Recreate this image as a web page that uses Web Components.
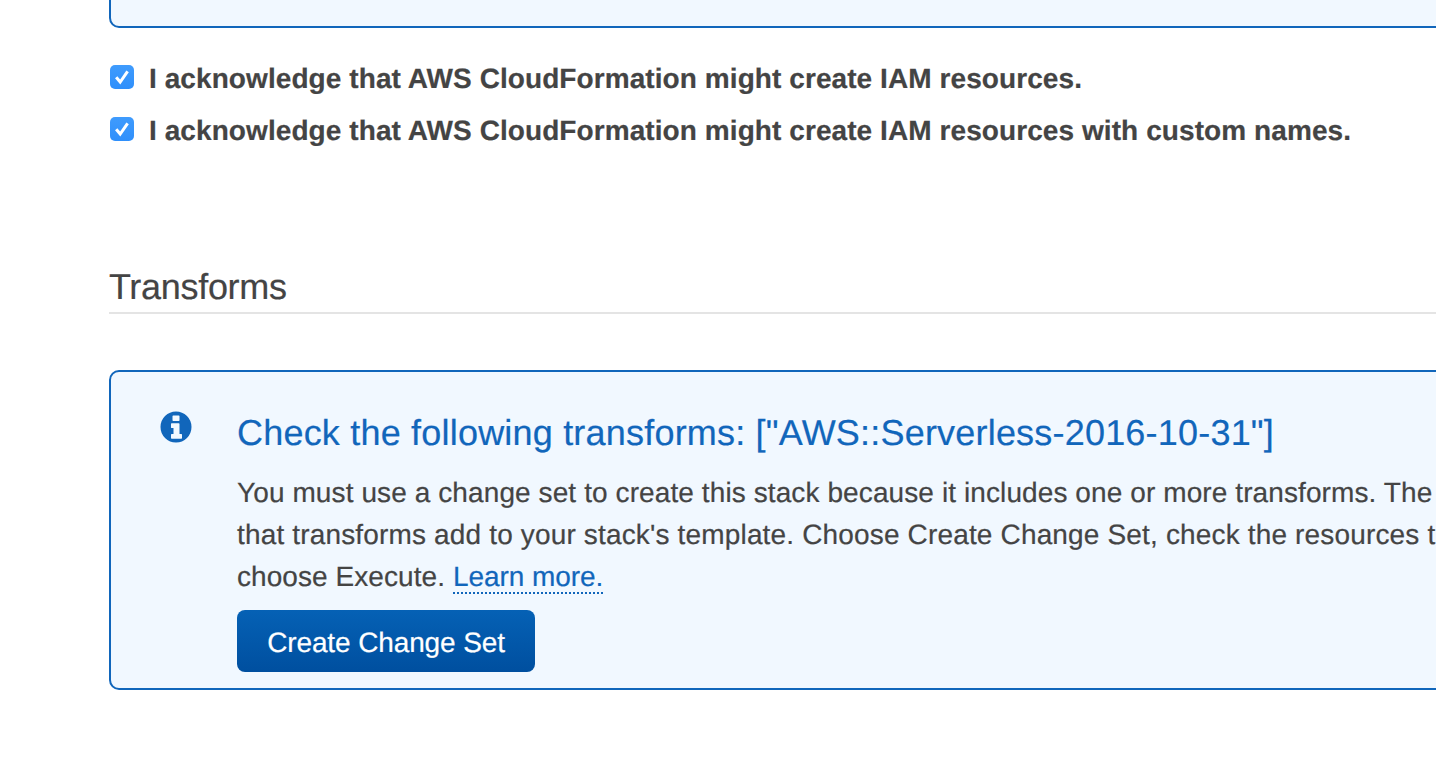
<!DOCTYPE html>
<html>
<head>
<meta charset="utf-8">
<style>
    html, body { margin: 0; padding: 0; height: 100%; overflow: hidden; background: #ffffff; }
    body { font-family: "Liberation Sans", Arial, sans-serif; color: #444444; text-rendering: geometricPrecision; -webkit-text-stroke: 0.2px; }
    #page { width: 1700px; padding-left: 109px; box-sizing: border-box; display: flex; flex-direction: column; margin-top: -60px; }
    .l1 { letter-spacing: 0.1px; }
    .l2 { letter-spacing: 0.16px; }
    .l3 { letter-spacing: 0.07px; }
</style>
</head>
<body>
<div id="page">
    <info-box empty></info-box>
    <ack-check style="margin-top: 37px">I acknowledge that AWS CloudFormation might create IAM resources.</ack-check>
    <ack-check style="margin-top: 28px">I acknowledge that AWS CloudFormation might create IAM resources with custom names.</ack-check>
    <section-title>Transforms</section-title>
    <info-box title="Check the following transforms: [&quot;AWS::Serverless-2016-10-31&quot;]">
        <span class="l l1">You must use a change set to create this stack because it includes one or more transforms. The resources</span>
        <span class="l l2">that transforms add to your stack's template. Choose Create Change Set, check the resources that</span>
        <span class="l l3">choose Execute. <a-link>Learn more.</a-link></span>
        <primary-button slot="action">Create Change Set</primary-button>
    </info-box>
</div>

<script>
class InfoBox extends HTMLElement {
    constructor() {
        super();
        this.attachShadow({ mode: 'open' });
    }

    connectedCallback() {
        const empty = this.hasAttribute('empty');
        const title = this.getAttribute('title') || '';
        this.removeAttribute('title');
        this.shadowRoot.innerHTML = `
            <style>
                :host {
                    display: block;
                    box-sizing: border-box;
                    border: 2px solid #1166bb;
                    border-radius: 10px;
                    background: #f1f8ff;
                }
                :host([empty]) { height: 88px; }
                .wrap {
                    display: grid;
                    grid-template-columns: 31px 1fr;
                    column-gap: 46px;
                    padding: 39px 0 16px 49px;
                }
                svg { display: block; width: 32px; height: 32px; margin-top: 0; }
                h2 {
                    margin: 0;
                    font-size: 36px;
                    line-height: 44px;
                    font-weight: 400;
                    letter-spacing: 0.2px;
                    color: #1166bb;
                    white-space: nowrap;
                }
                .body {
                    margin-top: 17px;
                    font-size: 28px;
                    line-height: 42px;
                    color: #444444;
                }
                ::slotted(.l) { display: block; white-space: nowrap; }
                .action { margin-top: 12px; }
            </style>
            ${empty ? '' : `
            <div class="wrap">
                <svg viewBox="0 0 32 32">
                    <path fill="#1166bb" fill-rule="evenodd" d="M16 0.5a15.5 15.5 0 1 0 0 31a15.5 15.5 0 1 0 0-31zM13.2 4.5h5.6a.7.7 0 0 1 .7.7v4.1a.7.7 0 0 1-.7.7h-5.6a.7.7 0 0 1-.7-.7v-4.1a.7.7 0 0 1 .7-.7zM11.7 12.2h7.1a.7.7 0 0 1 .7.7v10.1h1.8a.7.7 0 0 1 .7.7v3.4a.7.7 0 0 1-.7.7h-9.6a.7.7 0 0 1-.7-.7v-3.4a.7.7 0 0 1 .7-.7h1.8v-5.9h-1.8a.7.7 0 0 1-.7-.7v-3.5a.7.7 0 0 1 .7-.7z"/>
                </svg>
                <div>
                    <h2>${title}</h2>
                    <div class="body"><slot></slot></div>
                    <div class="action"><slot name="action"></slot></div>
                </div>
            </div>`}
        `;
    }
}

class AckCheck extends HTMLElement {
    constructor() {
        super();
        this.attachShadow({ mode: 'open' });
        this.shadowRoot.innerHTML = `
            <style>
                :host {
                    display: flex;
                    align-items: center;
                    gap: 15px;
                    margin-left: 1px;
                    height: 24px;
                    font-size: 28px;
                    font-weight: 700;
                    letter-spacing: 0.08px;
                    color: #444444;
                    white-space: nowrap;
                }
                .box {
                    flex: none;
                    width: 24px;
                    height: 24px;
                    border-radius: 5px;
                    background: linear-gradient(180deg, #3f9bfd 0%, #2f8ffb 100%);
                }
                svg { display: block; width: 24px; height: 24px; }
                .text { padding-top: 3px; }
            </style>
            <span class="box">
                <svg viewBox="0 0 24 24"><path d="M6.2 12.2l4 4.8 7.4-10.6" fill="none" stroke="#ffffff" stroke-width="3"/></svg>
            </span>
            <span class="text"><slot></slot></span>
        `;
    }
}

class SectionTitle extends HTMLElement {
    constructor() {
        super();
        this.attachShadow({ mode: 'open' });
        this.shadowRoot.innerHTML = `
            <style>
                :host {
                    display: block;
                    margin-top: 124px;
                    margin-bottom: 56px;
                    padding-bottom: 3px;
                    border-bottom: 2px solid #e4e4e4;
                    font-size: 36px;
                    line-height: 44px;
                    letter-spacing: -0.3px;
                    color: #444444;
                }
            </style>
            <slot></slot>
        `;
    }
}

class ALink extends HTMLElement {
    constructor() {
        super();
        this.attachShadow({ mode: 'open' });
        this.shadowRoot.innerHTML = `
            <style>
                :host {
                    display: inline-block;
                    line-height: 31px;
                    letter-spacing: -0.05px;
                    color: #1166bb;
                    border-bottom: 2px dotted #1166bb;
                    cursor: pointer;
                }
            </style>
            <slot></slot>
        `;
    }
}

class PrimaryButton extends HTMLElement {
    constructor() {
        super();
        this.attachShadow({ mode: 'open' });
        this.shadowRoot.innerHTML = `
            <style>
                :host {
                    display: inline-flex;
                    align-items: center;
                    justify-content: center;
                    box-sizing: border-box;
                    width: 298px;
                    height: 62px;
                    padding: 4px 0 0 0;
                    border-radius: 8px;
                    background: linear-gradient(180deg, #0561b5 0%, #004f9f 100%);
                    color: #ffffff;
                    font-size: 28px;
                    letter-spacing: -0.12px;
                    cursor: pointer;
                }
            </style>
            <slot></slot>
        `;
    }
}

customElements.define('info-box', InfoBox);
customElements.define('ack-check', AckCheck);
customElements.define('section-title', SectionTitle);
customElements.define('a-link', ALink);
customElements.define('primary-button', PrimaryButton);
</script>
</body>
</html>
